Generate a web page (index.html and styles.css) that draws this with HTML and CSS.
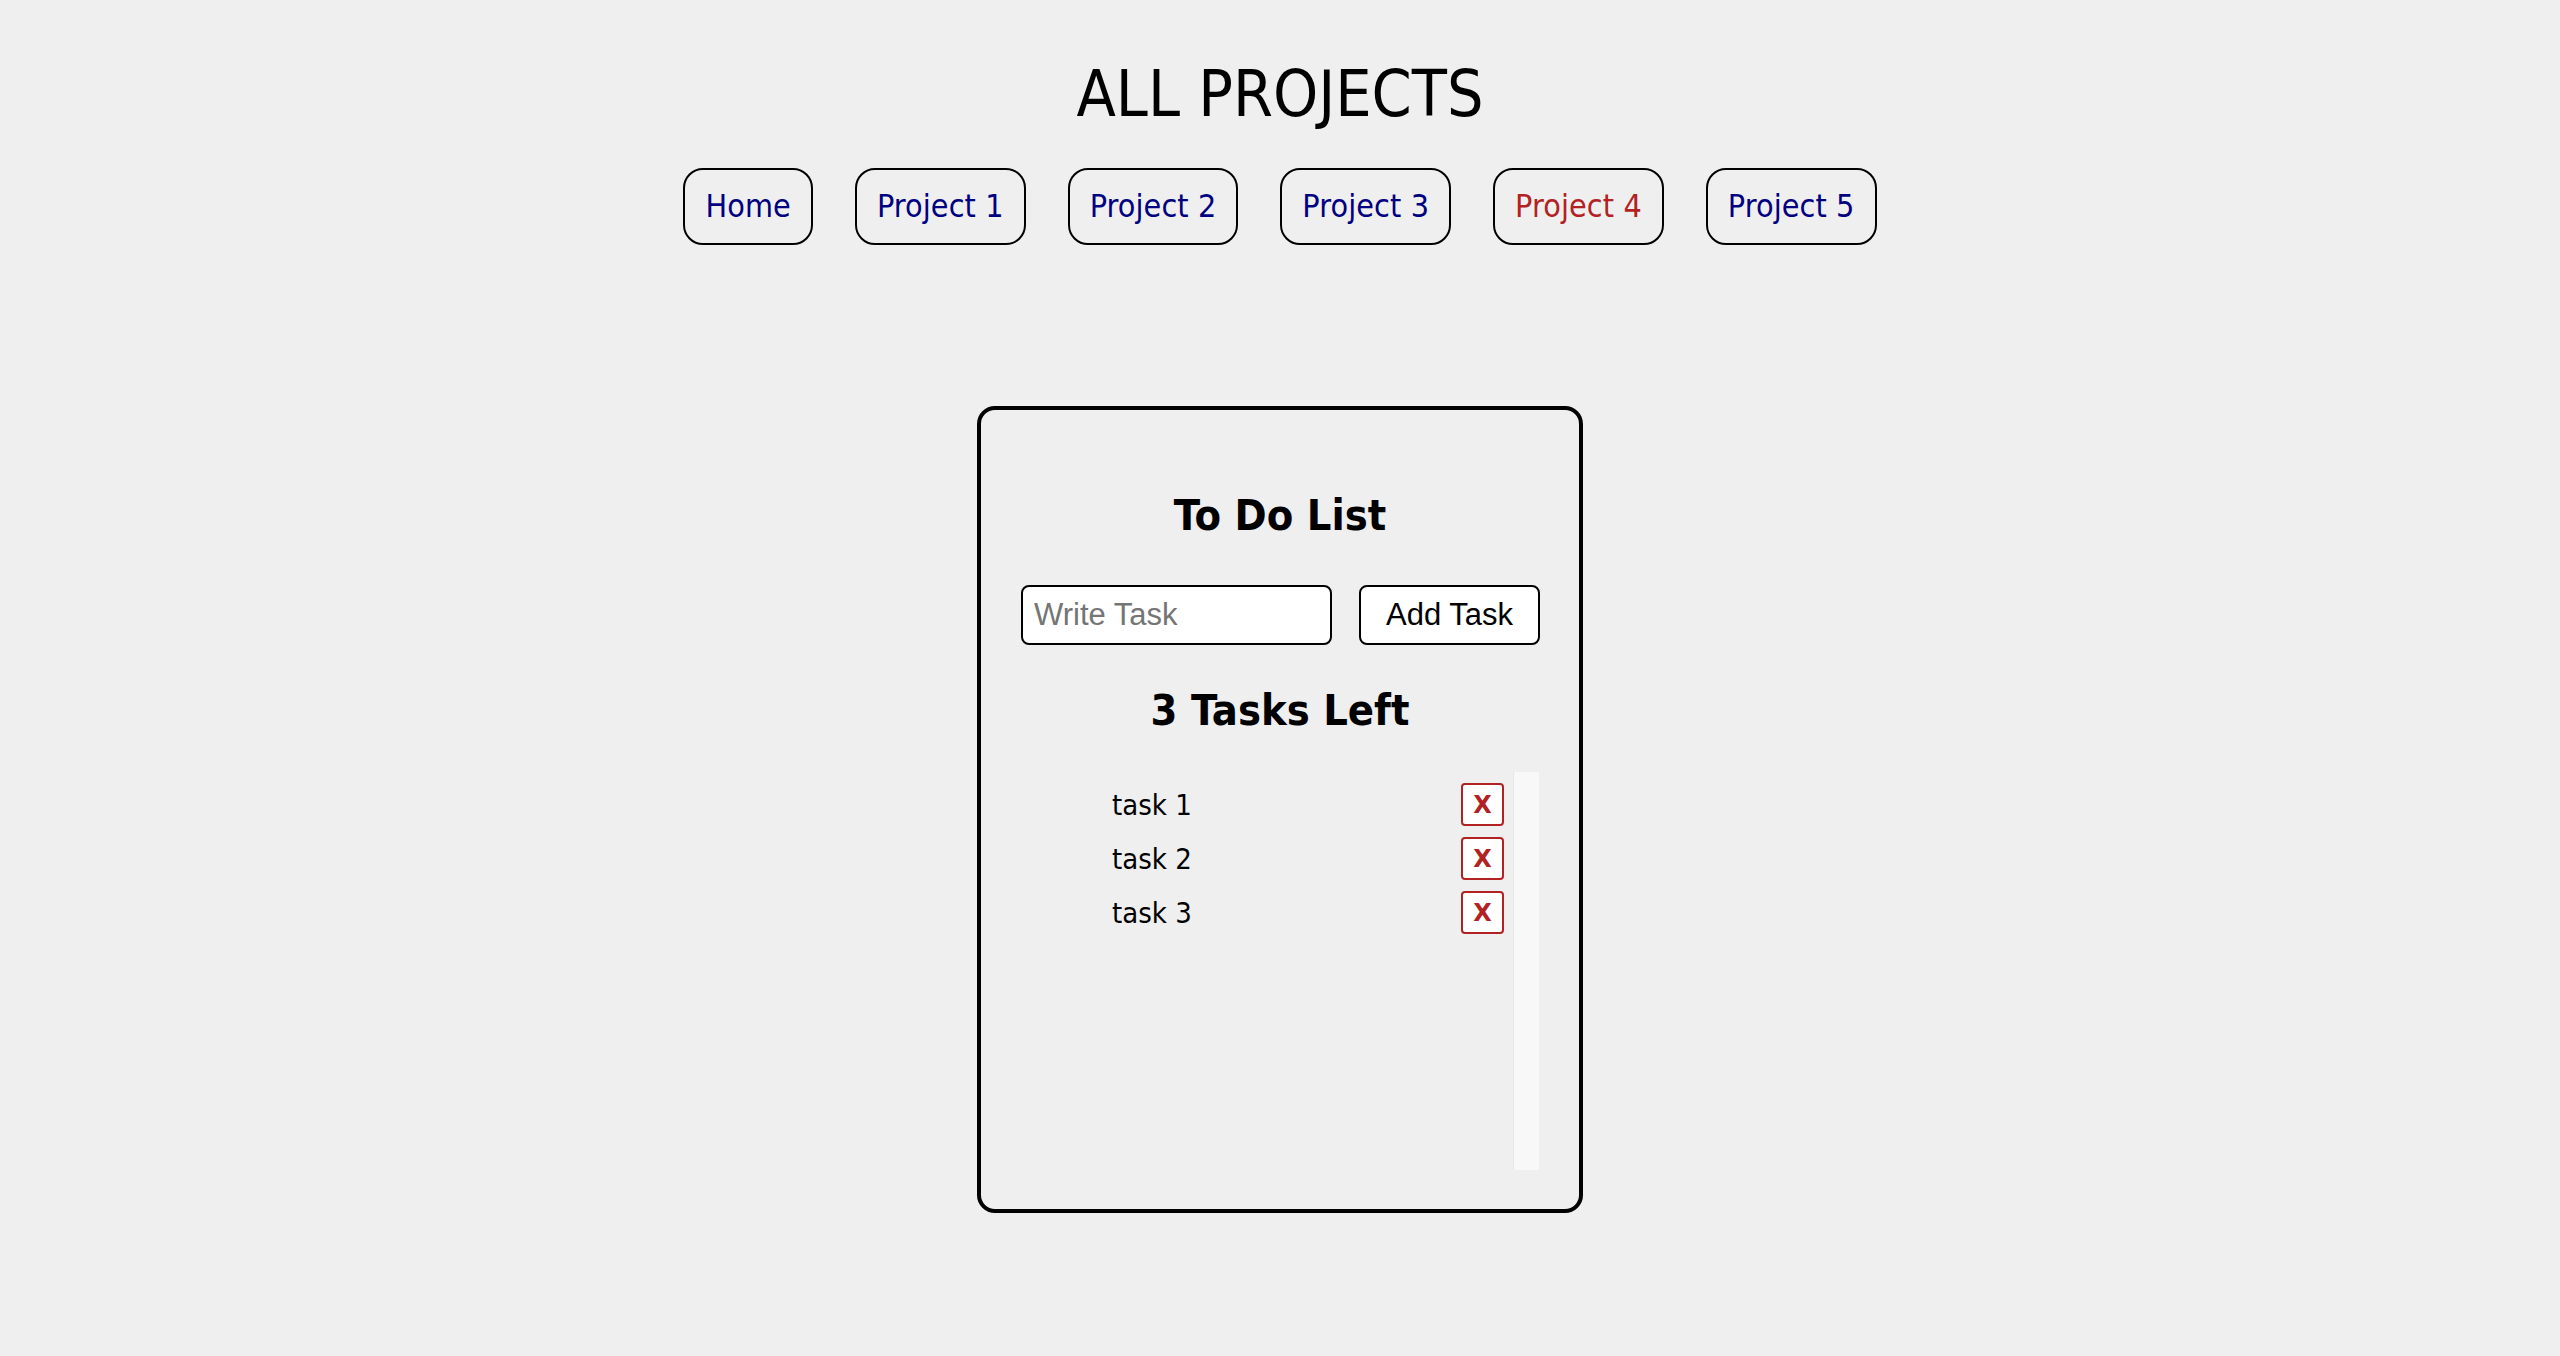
FILE: index.html
```html
<!DOCTYPE html>
<html lang="en">
<head>
<meta charset="utf-8">
<title>All Projects</title>
<link rel="stylesheet" href="styles.css">
</head>
<body>
<header class="header">
  <h1 class="title">ALL PROJECTS</h1>
  <nav class="nav">
    <a class="nav-link" href="#">Home</a>
    <a class="nav-link" href="#">Project 1</a>
    <a class="nav-link" href="#">Project 2</a>
    <a class="nav-link" href="#">Project 3</a>
    <a class="nav-link nav-link-active" href="#">Project 4</a>
    <a class="nav-link" href="#">Project 5</a>
  </nav>
</header>
<main class="main">
  <section class="card">
    <h2 class="card-title">To Do List</h2>
    <form class="task-form">
      <input class="task-input" type="text" placeholder="Write Task">
      <button class="add-btn" type="button">Add Task</button>
    </form>
    <h2 class="card-title">3 Tasks Left</h2>
    <div class="task-scroller">
      <ul class="tasks">
        <li class="task"><span class="task-name">task 1</span><button class="delete-btn" type="button">X</button></li>
        <li class="task"><span class="task-name">task 2</span><button class="delete-btn" type="button">X</button></li>
        <li class="task"><span class="task-name">task 3</span><button class="delete-btn" type="button">X</button></li>
      </ul>
      <div class="scroll-track"></div>
    </div>
  </section>
</main>
</body>
</html>
```
FILE: styles.css
```css
html, body {
  margin: 0;
  background: #efefef;
}

body {
  font-family: "DejaVu Sans Condensed", "DejaVu Sans", sans-serif;
  color: #000;
}

.header {
  display: flex;
  flex-direction: column;
  align-items: center;
  padding-top: 57px;
}

.title {
  margin: 0;
  font-size: 64px;
  font-weight: normal;
  line-height: 74px;
}

.nav {
  margin-top: 37px;
  display: flex;
  gap: 42px;
}

.nav-link {
  display: block;
  height: 73px;
  line-height: 73px;
  padding: 0 20px;
  border: 2px solid #000;
  border-radius: 20px;
  color: #000080;
  font-size: 32px;
  letter-spacing: 0.1px;
  text-decoration: none;
}

.nav-link-active {
  color: #b22222;
}

.main {
  display: flex;
  justify-content: center;
  margin-top: 161px;
}

.card {
  box-sizing: border-box;
  width: 606px;
  border: 4px solid #000;
  border-radius: 18px;
  padding: 81px 40px 39px;
}

.card-title {
  margin: 0;
  text-align: center;
  font-size: 43px;
  font-weight: bold;
  line-height: 48px;
}

.task-form {
  display: flex;
  gap: 27px;
  margin: 46px 0 41px;
  height: 60px;
}

.task-input {
  box-sizing: border-box;
  width: 311px;
  height: 60px;
  border: 2px solid #000;
  border-radius: 8px;
  padding: 0 11px;
  background: #fff;
  font-family: "Liberation Sans", Arial, sans-serif;
  font-size: 31px;
  color: #000;
  outline: none;
}

.task-input::placeholder {
  color: #757575;
}

.add-btn {
  box-sizing: border-box;
  flex: none;
  width: 181px;
  height: 60px;
  border: 2px solid #000;
  border-radius: 8px;
  padding: 0;
  background: #fff;
  font-family: "Liberation Sans", Arial, sans-serif;
  font-size: 31px;
  color: #000;
}

.task-scroller {
  display: flex;
  margin-top: 38px;
  height: 398px;
}

.tasks {
  flex: 1;
  list-style: none;
  margin: 0;
  padding: 11px 9px 0 91px;
  display: flex;
  flex-direction: column;
  gap: 11px;
}

.scroll-track {
  flex: none;
  width: 25px;
  background: #f8f8f8;
  border-left: 1px solid #e6e6e6;
}

.task {
  display: flex;
  align-items: center;
  justify-content: space-between;
  height: 43px;
  flex: none;
  font-size: 29px;
}

.delete-btn {
  box-sizing: border-box;
  width: 43px;
  height: 43px;
  border: 2px solid #b22222;
  border-radius: 4px;
  padding: 0;
  background: #fff;
  color: #b22222;
  font-family: "DejaVu Sans", sans-serif;
  font-weight: bold;
  font-size: 24px;
  line-height: 1;
}
```
